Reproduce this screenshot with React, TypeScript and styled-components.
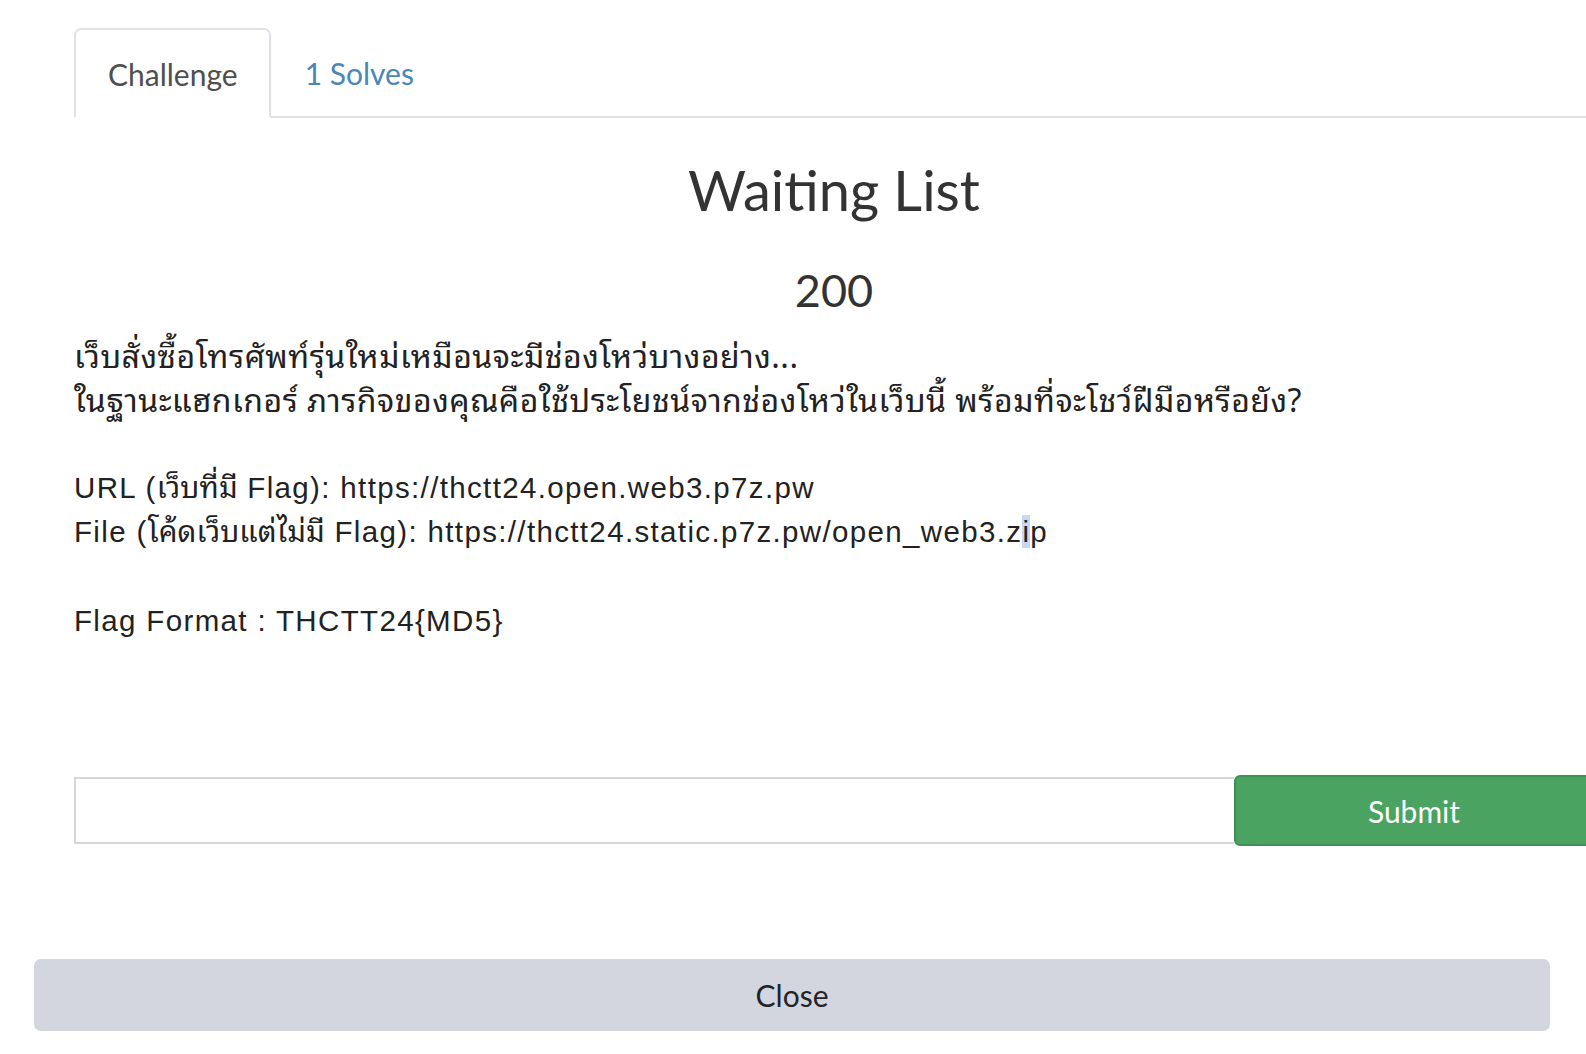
import React from "react";
import styled, { createGlobalStyle } from "styled-components";

const Global = createGlobalStyle`
  html, body { margin: 0; padding: 0; background: #fff; overflow: hidden; }
  body { font-family: Lato, "Open Sans", sans-serif; color: #212529; }
  * { box-sizing: border-box; }
`;

const Page = styled.div`
  width: 1586px;
  height: 1054px;
  overflow: hidden;
  padding-left: 34px;
  padding-top: 30px;
`;

const Body = styled.div`
  width: 1560px;
  padding-left: 40px;
`;

const TabBar = styled.div`
  display: flex;
  align-items: flex-end;
  border-bottom: 2px solid #dee2e6;
  height: 88px;
`;

const Tab = styled.div<{ $active?: boolean }>`
  height: ${(p) => (p.$active ? "90px" : "88px")};
  margin-bottom: ${(p) => (p.$active ? "-2px" : "0")};
  padding: 2px 31px 0 32px;
  display: flex;
  align-items: center;
  font-size: 30px;
  color: ${(p) => (p.$active ? "#4f4f4f" : "#4a86b8")};
  background: ${(p) => (p.$active ? "#fff" : "transparent")};
  border: 2px solid ${(p) => (p.$active ? "#dee2e6" : "transparent")};
  border-bottom-color: ${(p) => (p.$active ? "#fff" : "transparent")};
  border-radius: 7px 7px 0 0;
`;

const Title = styled.h3`
  margin: 38px 0 0;
  text-align: center;
  font-weight: 400;
  font-size: 56px;
  line-height: 1.2;
  color: #333;
`;

const Points = styled.h4`
  margin: 40px 0 0;
  text-align: center;
  font-weight: 400;
  font-size: 45px;
  line-height: 1.2;
  color: #333;
`;

const Description = styled.div`
  margin-top: 16px;
  font-family: "Liberation Sans", Arial, sans-serif;
  font-size: 29.5px;
  line-height: 44.3px;
  letter-spacing: 1.35px;
  color: #222;
  white-space: pre-wrap;
`;

const Th = styled.span<{ $inline?: boolean }>`
  font-family: "Noto Sans Thai Looped", "Garuda", "Loma", "Tlwg Typo", "Noto Sans Thai", "Liberation Sans", sans-serif;
  font-size: ${(p) => (p.$inline ? "29.5px" : "32px")};
  letter-spacing: ${(p) => (p.$inline ? "0.1px" : "0.5px")};
  line-height: 20px;
  vertical-align: ${(p) => (p.$inline ? "baseline" : "-3px")};
`;

const Sel = styled.span`
  background: #c5d9f5;
`;

const SubmitRow = styled.div`
  margin-top: 132px;
  display: flex;
  align-items: center;
  width: 1520px;
`;

const FlagInput = styled.input`
  flex: 1;
  height: 67px;
  border: 2px solid #d3d6de;
  border-right: none;
  font-size: 28px;
  padding: 0 20px;
  outline: none;
  background: #fff;
`;

const SubmitButton = styled.button`
  width: 360px;
  height: 71px;
  background: #4aa360;
  border: 2px solid #3f8e53;
  border-radius: 6px 0 0 6px;
  color: #fff;
  font-family: Lato, "Open Sans", sans-serif;
  font-size: 30px;
  padding: 0;
`;

const Footer = styled.div`
  margin-top: 113px;
  width: 1516px;
`;

const CloseButton = styled.button`
  width: 100%;
  height: 72px;
  background: #d3d6de;
  border: none;
  border-radius: 7px;
  color: #212529;
  font-family: Lato, "Open Sans", sans-serif;
  font-size: 30px;
  padding: 0;
`;

export default function App() {
  return (
    <>
      <Global />
      <Page>
        <Body>
          <TabBar>
            <Tab $active>Challenge</Tab>
            <Tab>1 Solves</Tab>
          </TabBar>
          <Title>Waiting List</Title>
          <Points>200</Points>
          <Description>
            <Th>เว็บสั่งซื้อโทรศัพท์รุ่นใหม่เหมือนจะมีช่องโหว่บางอย่าง...</Th>
            {"\n"}
            <Th>ในฐานะแฮกเกอร์ ภารกิจของคุณคือใช้ประโยชน์จากช่องโหว่ในเว็บนี้ พร้อมที่จะโชว์ฝีมือหรือยัง?</Th>
            {"\n\nURL ("}
            <Th $inline>เว็บที่มี</Th>
            {" Flag): https://thctt24.open.web3.p7z.pw\nFile ("}
            <Th $inline>โค้ดเว็บแต่ไม่มี</Th>
            {" Flag): https://thctt24.static.p7z.pw/open_web3.z"}
            <Sel>i</Sel>
            {"p\n\nFlag Format : THCTT24{MD5}"}
          </Description>
          <SubmitRow>
            <FlagInput />
            <SubmitButton>Submit</SubmitButton>
          </SubmitRow>
        </Body>
        <Footer>
          <CloseButton>Close</CloseButton>
        </Footer>
      </Page>
    </>
  );
}
